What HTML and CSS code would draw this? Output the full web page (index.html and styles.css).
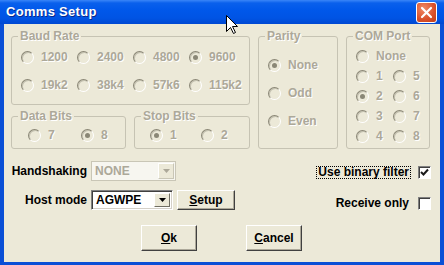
FILE: index.html
```html
<!DOCTYPE html>
<html lang="en">
<head>
    <meta charset="UTF-8">
    <title>Comms Setup</title>
    <link rel="stylesheet" href="styles.css">
</head>
<body>
    <div class="window">
        <div class="titlebar">
            <span class="title">Comms Setup</span>
            <span class="close">
                <svg width="13" height="13" viewBox="0 0 13 13"><path d="M2 2 L11 11 M11 2 L2 11" stroke="#fff" stroke-width="2.2" stroke-linecap="round"/></svg>
            </span>
        </div>

        <div class="client">
            <div class="groups">
                <div class="left-col">
                    <fieldset class="group baud">
                        <legend>Baud Rate</legend>
                        <div class="opts baud-opts">
                            <label class="opt"><span class="radio"></span>1200</label>
                            <label class="opt"><span class="radio"></span>2400</label>
                            <label class="opt"><span class="radio"></span>4800</label>
                            <label class="opt"><span class="radio checked"></span>9600</label>
                            <label class="opt"><span class="radio"></span>19k2</label>
                            <label class="opt"><span class="radio"></span>38k4</label>
                            <label class="opt"><span class="radio"></span>57k6</label>
                            <label class="opt"><span class="radio"></span>115k2</label>
                        </div>
                    </fieldset>
                    <div class="bits">
                        <fieldset class="group data">
                            <legend>Data Bits</legend>
                            <div class="opts data-opts">
                                <label class="opt"><span class="radio"></span>7</label>
                                <label class="opt"><span class="radio checked"></span>8</label>
                            </div>
                        </fieldset>
                        <fieldset class="group stop">
                            <legend>Stop Bits</legend>
                            <div class="opts stop-opts">
                                <label class="opt"><span class="radio checked"></span>1</label>
                                <label class="opt"><span class="radio"></span>2</label>
                            </div>
                        </fieldset>
                    </div>
                </div>

                <fieldset class="group parity">
                    <legend>Parity</legend>
                    <div class="opts parity-opts">
                        <label class="opt"><span class="radio checked"></span>None</label>
                        <label class="opt"><span class="radio"></span>Odd</label>
                        <label class="opt"><span class="radio"></span>Even</label>
                    </div>
                </fieldset>

                <fieldset class="group com">
                    <legend>COM Port</legend>
                    <div class="opts com-opts">
                        <label class="opt wide"><span class="radio"></span>None</label>
                        <label class="opt"><span class="radio"></span>1</label>
                        <label class="opt"><span class="radio"></span>5</label>
                        <label class="opt"><span class="radio checked"></span>2</label>
                        <label class="opt"><span class="radio"></span>6</label>
                        <label class="opt"><span class="radio"></span>3</label>
                        <label class="opt"><span class="radio"></span>7</label>
                        <label class="opt"><span class="radio"></span>4</label>
                        <label class="opt"><span class="radio"></span>8</label>
                    </div>
                </fieldset>
            </div>

            <div class="settings">
                <div class="fields">
                    <span class="label">Handshaking</span>
                    <div class="combo disabled">
                        <span class="value">NONE</span>
                        <span class="drop"><svg width="7" height="4" viewBox="0 0 7 4"><path d="M0 0 H7 L3.5 4 Z" fill="#aca899"/></svg></span>
                    </div>
                    <span></span>

                    <span class="label">Host mode</span>
                    <div class="combo">
                        <span class="value">AGWPE</span>
                        <span class="drop"><svg width="7" height="4" viewBox="0 0 7 4"><path d="M0 0 H7 L3.5 4 Z" fill="#000"/></svg></span>
                    </div>
                    <button class="btn setup"><u>S</u>etup</button>
                </div>

                <div class="checks">
                    <div class="check-row">
                        <span class="check-label focus">Use binary filter</span>
                        <span class="checkbox">
                            <svg width="9" height="9" viewBox="0 0 9 9"><path d="M1 4 L3.5 6.5 L8 1.5" stroke="#1a1a1a" stroke-width="2" fill="none"/></svg>
                        </span>
                    </div>
                    <div class="check-row">
                        <span class="check-label">Receive only</span>
                        <span class="checkbox"></span>
                    </div>
                </div>
            </div>

            <div class="actions">
                <button class="btn"><u>O</u>k</button>
                <button class="btn"><u>C</u>ancel</button>
            </div>
        </div>

        <!-- mouse pointer sitting on the title bar -->
        <svg class="cursor" width="13" height="20" viewBox="0 0 13 20">
            <path d="M0.5 0.5 L0.5 16.5 L4.5 12.5 L7.5 18.5 L9.5 17.5 L6.5 11.5 L11.5 11.5 Z" fill="#fff" stroke="#000" stroke-width="1"/>
        </svg>
    </div>
</body>
</html>
```

FILE: styles.css
```css
body {
    margin: 0;
    font-family: "Liberation Sans", Arial, sans-serif;
    font-size: 12px;
    font-weight: bold;
}

.window {
    position: relative;
    width: 444px;
    height: 265px;
    background-color: #0a4fd6;
    display: flex;
    flex-direction: column;
    overflow: hidden;
}

.titlebar {
    height: 24px;
    flex-shrink: 0;
    display: flex;
    align-items: center;
    justify-content: space-between;
    padding: 0 7px 0 6px;
    background: linear-gradient(#3a86f8 0, #0a60ec 3px, #0058ea 10px, #0054e4 18px, #0048d2 24px);
    box-sizing: border-box;
}

.title {
    color: white;
    font-size: 13px;
    letter-spacing: 0.3px;
    text-shadow: 1px 1px 0 #0a2a8c;
    margin-top: -1px;
}

.close {
    width: 19px;
    height: 19px;
    display: flex;
    align-items: center;
    justify-content: center;
    border: 1px solid white;
    border-radius: 3px;
    background: radial-gradient(circle at 35% 30%, #f08a66, #d9502a 60%, #c03d18);
    margin-top: 1px;
}

.client {
    flex: 1;
    margin: 0 4px 3px 4px;
    background-color: #ece9d8;
}

/* group boxes */
.groups {
    display: flex;
    gap: 8px;
    padding: 5px 0 0 7px;
}

.left-col {
    display: flex;
    flex-direction: column;
    gap: 4px;
}

.bits {
    display: flex;
    gap: 8px;
}

.group {
    margin: 0;
    padding: 0;
    border: 1px solid #c6c3b3;
    border-radius: 3px;
    box-sizing: border-box;
    min-width: 0;
}

.group legend {
    margin-left: 6px;
    padding: 0 2px;
    line-height: 14px;
    color: #aca899;
    text-shadow: 1px 1px 0 #fff;
}

.baud {
    width: 239px;
    height: 76px;
}

.data {
    width: 115px;
    height: 40px;
}

.stop {
    width: 116px;
    height: 40px;
}

.parity {
    width: 80px;
    height: 120px;
}

.com {
    width: 84px;
    height: 120px;
}

.opts {
    display: grid;
}

.baud-opts {
    grid-template-columns: repeat(4, 56px);
    row-gap: 14px;
    padding: 7px 0 0 9px;
}

.data-opts {
    grid-template-columns: 53px 53px;
    padding: 5px 0 0 16px;
}

.stop-opts {
    grid-template-columns: 51px 51px;
    padding: 5px 0 0 15px;
}

.parity-opts {
    grid-template-columns: 1fr;
    row-gap: 14px;
    padding: 15px 0 0 9px;
}

.com-opts {
    grid-template-columns: 37px 37px;
    row-gap: 6px;
    padding: 6px 0 0 9px;
}

.com-opts .wide {
    grid-column: span 2;
}

.opt {
    display: flex;
    align-items: center;
    height: 14px;
    line-height: 14px;
    color: #aca899;
    text-shadow: 1px 1px 0 #fff;
    white-space: nowrap;
}

.radio {
    position: relative;
    width: 11px;
    height: 11px;
    margin-right: 7px;
    border: 1px solid;
    border-color: #8a8776 #fff #fff #8a8776;
    border-radius: 50%;
    box-shadow: inset 1px 1px 0 #c4c1b0;
    background-color: #ece9d8;
    flex-shrink: 0;
}

.radio.checked::after {
    content: "";
    position: absolute;
    left: 3px;
    top: 3px;
    width: 5px;
    height: 5px;
    border-radius: 50%;
    background-color: #8a8776;
}

/* handshaking / host mode and the check boxes */
.settings {
    display: flex;
    justify-content: space-between;
    margin-top: 12px;
    padding-right: 9px;
}

.fields {
    display: grid;
    grid-template-columns: 83px 82px auto;
    grid-auto-rows: 20px;
    column-gap: 4px;
    row-gap: 9px;
}

.label {
    align-self: center;
    text-align: right;
    color: black;
}

.combo {
    display: flex;
    align-items: center;
    justify-content: space-between;
    box-sizing: border-box;
    height: 20px;
    padding: 2px;
    border: 1px solid;
    border-color: #808080 #fff #fff #808080;
    box-shadow: inset 1px 1px 0 #404040, inset -1px -1px 0 #d4d0c8;
    background-color: white;
}

.combo .value {
    padding-left: 2px;
}

.combo.disabled {
    width: 85px;
    border: 1px solid #c9c6b6;
    box-shadow: none;
    background-color: #f7f6f0;
    color: #aca899;
    padding: 1px;
}

.drop {
    width: 16px;
    height: 14px;
    box-sizing: border-box;
    display: flex;
    align-items: center;
    justify-content: center;
    background-color: #ece9d8;
    border: 1px solid;
    border-color: #fff #716f64 #716f64 #fff;
}

.combo.disabled .drop {
    height: 16px;
    border-color: #fff #c9c6b6 #c9c6b6 #fff;
}

.btn {
    font-family: inherit;
    font-size: 12px;
    font-weight: bold;
    color: black;
    padding: 0;
    background-color: #ece9d8;
    border: 1px solid;
    border-color: #fff #404040 #404040 #fff;
    box-shadow: inset -1px -1px 0 #aca899;
    cursor: pointer;
}

.setup {
    width: 58px;
}

.checks {
    display: flex;
    flex-direction: column;
    align-items: flex-end;
    gap: 11px;
    margin-top: 1px;
}

.check-row {
    display: flex;
    align-items: center;
    gap: 7px;
    height: 20px;
}

.check-label {
    padding: 0 1px;
    border: 1px dotted transparent;
    line-height: 11px;
    color: black;
}

.check-label.focus {
    border-color: #000;
}

.checkbox {
    width: 11px;
    height: 11px;
    display: flex;
    align-items: center;
    justify-content: center;
    border: 1px solid;
    border-color: #808080 #fff #fff #808080;
    box-shadow: inset 1px 1px 0 #404040;
    background-color: white;
}

/* ok / cancel */
.actions {
    display: flex;
    gap: 49px;
    padding-left: 137px;
    margin-top: 12px;
}

.actions .btn {
    width: 56px;
    height: 26px;
}

.cursor {
    position: absolute;
    left: 226px;
    top: 15px;
}
```
